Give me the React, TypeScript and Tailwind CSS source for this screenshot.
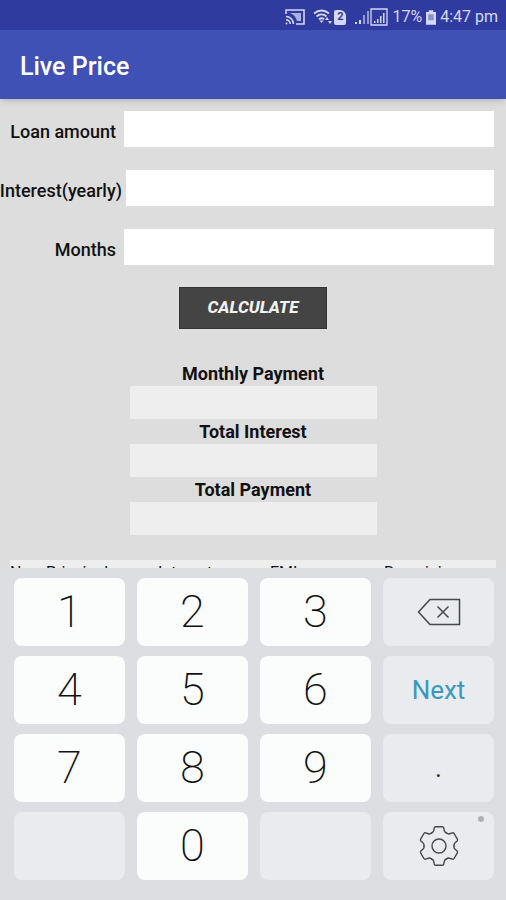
import { useState } from 'react'

const fields = [
  { id: 'amount', label: 'Loan amount', labelClass: 'w-[124px] pr-2' },
  { id: 'interest', label: 'Interest(yearly)', labelClass: 'w-[126px] pr-1' },
  { id: 'months', label: 'Months', labelClass: 'w-[124px] pr-2' },
]

const results = [
  { id: 'monthly', label: 'Monthly Payment' },
  { id: 'total-interest', label: 'Total Interest' },
  { id: 'total-payment', label: 'Total Payment' },
]

const keys = ['1', '2', '3', 'delete', '4', '5', '6', 'Next', '7', '8', '9', '.', 'blank-left', '0', 'blank-right', 'settings']

function StatusBar() {
  return (
    <div className="flex h-[30px] items-center justify-end bg-[#303b9f] pt-1 pr-2 text-[#d3d8f5]">
      {/* cast */}
      <svg className="mr-2 h-4 w-5" viewBox="0 0 20 16" fill="none" stroke="currentColor" strokeWidth="1.6">
        <path d="M1 5V1h18v14h-8" />
        <path d="M1 7.500c4 0 7.500 3.500 7.500 7.500M1 10.800c2.300 0 4.200 1.900 4.200 4.200" />
        <path d="M5 4h11v8h-4C11 8 8.500 5.500 5 4Z" fill="currentColor" stroke="none" opacity=".75" />
        <circle cx="1.500" cy="14.500" r="1" fill="currentColor" stroke="none" />
      </svg>
      {/* wifi */}
      <svg className="mr-px h-4 w-5" viewBox="0 0 20 16" fill="none" stroke="currentColor" strokeWidth="1.9">
        <path d="M1 4.500c4.500-4 10.500-4 15 0M3.500 7.500c3-2.700 7-2.700 10 0M6 10.300c1.700-1.400 3.500-1.400 5 0" />
        <path d="m6.500 11.500 2 2.500 2-2.500Z" fill="currentColor" stroke="none" />
        <path d="m12 11 2-3 2 3ZM15 12h4l-2 3Z" fill="currentColor" stroke="none" />
      </svg>
      <span className="mr-2 flex h-[15px] w-3 items-center justify-center rounded-xs rounded-tr-md bg-[#d3d8f5] text-[11px] font-bold text-[#303b9f]">
        2
      </span>
      {/* signal */}
      <svg className="h-4 w-4" viewBox="0 0 16 16" fill="currentColor">
        <path d="M1 13h2v2H1zM5 11h2v4H5z" />
        <path d="M9 6h2v9H9zM13 2h2v13h-2z" opacity=".6" />
      </svg>
      <svg className="mr-1 h-[18px] w-[18px]" viewBox="0 0 18 18" fill="currentColor">
        <path d="M1 1h16v16H1Z" fill="none" stroke="currentColor" strokeWidth="1.300" />
        <path d="M4 13h1.500v2H4zM7 11h1.500v4H7zM10 8h1.500v7H10zM13 5h1.500v10H13z" />
      </svg>
      <span className="text-[16px]">17%</span>
      {/* battery */}
      <svg className="mx-1 h-[15px] w-[10px]" viewBox="0 0 11 16" fill="currentColor">
        <path d="M3 0h5v2h3v14H0V2h3Z" />
        <path d="M2.500 4.500h6V11h-6Z" fill="#303b9f" opacity=".45" />
      </svg>
      <span className="text-[16px]">4:47 pm</span>
    </div>
  )
}

function DeleteIcon() {
  return (
    <svg className="h-7 w-11" viewBox="0 0 44 28" fill="none" stroke="#45474b" strokeWidth="1.500">
      <path d="M1.500 14 13 1.500h29.500v25H13Z" />
      <path d="m20.500 8.500 11 11m0-11-11 11" />
    </svg>
  )
}

function GearIcon() {
  const tooth = 'M-7.500-13Q-5.600-13.600-5.300-15.300L-4.700-18.200Q-4.400-19.300-3.300-19.300H3.300Q4.400-19.300 4.700-18.200L5.300-15.300Q5.600-13.600 7.500-13'
  return (
    <svg className="h-10 w-10" viewBox="-20 -20 40 40" fill="none" stroke="#45474b" strokeWidth="1.400" strokeLinecap="round">
      {[0, 60, 120, 180, 240, 300].map((angle) => (
        <path key={angle} d={tooth} transform={`rotate(${angle})`} />
      ))}
      <circle r="7" />
    </svg>
  )
}

function Key({ name, onPress }: { name: string; onPress: (name: string) => void }) {
  const base = 'flex h-[68px] items-center justify-center rounded-lg'

  if (/^\d$/.test(name)) {
    return (
      <button type="button" onClick={() => onPress(name)} className={`${base} bg-[#fbfcfc] text-[45px] font-extralight text-[#111111]`}>
        {name}
      </button>
    )
  }
  if (name === 'delete') {
    return (
      <button type="button" aria-label="Delete" onClick={() => onPress(name)} className={`${base} bg-[#e9ebee]`}>
        <DeleteIcon />
      </button>
    )
  }
  if (name === 'settings') {
    return (
      <button type="button" aria-label="Settings" className={`${base} relative bg-[#e9ebee]`}>
        <GearIcon />
        <span className="absolute top-1 right-2.5 h-1.5 w-1.5 rounded-full bg-[#afb1b5]" />
      </button>
    )
  }
  if (name.startsWith('blank')) {
    return <button type="button" aria-label="Blank key" className={`${base} bg-[#e9ebee]`} />
  }
  return (
    <button
      type="button"
      onClick={() => onPress(name)}
      className={`${base} bg-[#e9ebee] text-[26px] ${name === 'Next' ? 'text-[#3b98bd]' : 'text-[#303030]'}`}
    >
      {name}
    </button>
  )
}

export default function App() {
  const [values, setValues] = useState(['', '', ''])
  const [active, setActive] = useState(0)
  const [totals, setTotals] = useState(['', '', ''])

  const update = (index: number, value: string) => {
    setValues(values.map((v, i) => (i === index ? value : v)))
  }

  const press = (name: string) => {
    if (name === 'Next') {
      setActive((active + 1) % fields.length)
    } else if (name === 'delete') {
      update(active, values[active].slice(0, -1))
    } else {
      update(active, values[active] + name)
    }
  }

  const calculate = () => {
    const [amount, interest, months] = values.map(Number)
    if (!amount || !months) return
    const rate = interest / 1200
    const emi = rate ? (amount * rate) / (1 - Math.pow(1 + rate, -months)) : amount / months
    setTotals([emi, emi * months - amount, emi * months].map((n) => n.toFixed(2)))
  }

  return (
    <div className="flex min-h-screen flex-col bg-[#dddddd] font-[Roboto,sans-serif] text-[#111111]">
      <StatusBar />
      <header className="z-10 flex h-[69px] items-center bg-[#3f51b5] px-5 pt-1 shadow-md">
        <h1 className="text-[25px] font-medium text-white">Live Price</h1>
      </header>

      <main className="flex flex-1 flex-col">
        <div className="flex flex-col gap-[23px] pt-3 pr-3">
          {fields.map((field, i) => (
            <div key={field.id} className="flex h-9">
              <label
                htmlFor={field.id}
                className={`flex shrink-0 items-center justify-end pt-1 text-[18px] font-medium whitespace-nowrap ${field.labelClass}`}
              >
                {field.label}
              </label>
              <input
                id={field.id}
                inputMode="decimal"
                value={values[i]}
                onFocus={() => setActive(i)}
                onChange={(e) => update(i, e.target.value)}
                className="min-w-0 flex-1 bg-white px-2 text-[18px] outline-none"
              />
            </div>
          ))}
        </div>

        <button
          type="button"
          onClick={calculate}
          className="mt-[22px] h-[42px] w-[148px] self-center border border-[#333333] bg-[#444444] text-[17px] font-extrabold text-[#f2f2f2] italic"
        >
          CALCULATE
        </button>

        <div className="mt-8 flex flex-col items-center">
          {results.map((result, i) => (
            <div key={result.id} className="flex h-[58px] w-[247px] flex-col">
              <label htmlFor={result.id} className="h-[25px] text-center text-[18px] leading-[25px] font-bold">
                {result.label}
              </label>
              <input id={result.id} readOnly value={totals[i]} className="h-[33px] bg-[#eeeeee] px-2 text-center outline-none" />
            </div>
          ))}
        </div>

        {/* schedule, mostly hidden behind the keypad */}
        <div className="mx-2.5 mt-[25px] h-2 overflow-hidden bg-[#eeeeee]">
          <table className="w-full table-fixed text-left text-[16px] leading-5">
            <thead>
              <tr>
                <th className="w-[36px] pt-[3px] font-normal">No</th>
                <th className="w-[112px] pt-[3px] font-normal">Principal</th>
                <th className="w-[112px] pt-[3px] font-normal">Interest</th>
                <th className="w-[114px] pt-[3px] font-normal">EMI</th>
                <th className="pt-[3px] font-normal">Remaining</th>
              </tr>
            </thead>
          </table>
        </div>
      </main>

      <section aria-label="Keypad" className="grid grid-cols-4 gap-x-3 gap-y-2.5 bg-[#dcdee2] pt-2.5 pr-3 pb-5 pl-3.5">
        {keys.map((name) => (
          <Key key={name} name={name} onPress={press} />
        ))}
      </section>
    </div>
  )
}
